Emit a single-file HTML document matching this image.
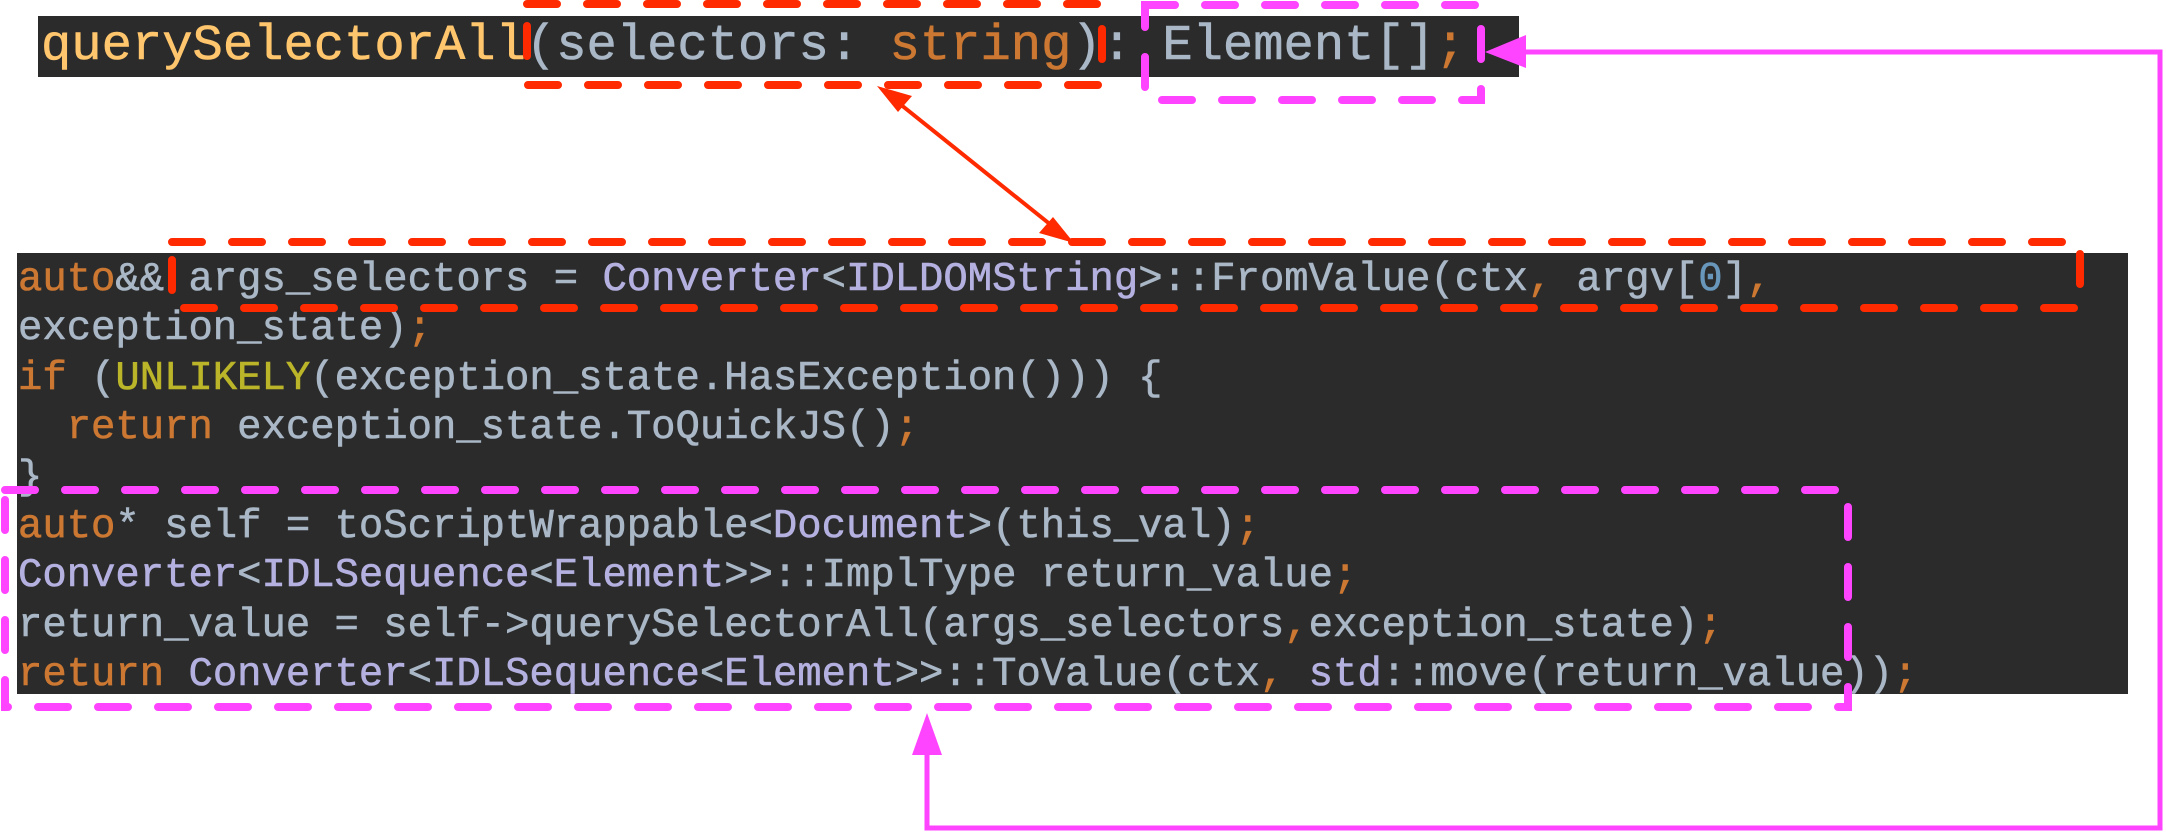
<!DOCTYPE html>
<html><head><meta charset="utf-8"><style>
html,body{margin:0;padding:0;background:#fff;width:2166px;height:833px;overflow:hidden;position:relative}
.box{position:absolute;background:#2b2b2b}
pre{margin:0;position:absolute;font-family:"Liberation Mono","DejaVu Sans Mono",monospace;color:#a9b7c6;white-space:pre;-webkit-text-stroke:0.6px currentColor}
.k{color:#cc7832}.t{color:#b4b0e0}.y{color:#ffc66d}.o{color:#bbb529}.n{color:#6897bb}
svg{position:absolute;left:0;top:0}
</style></head><body>
<div class="box" style="left:38px;top:16px;width:1481px;height:61px"></div>
<pre style="left:41px;top:16px;font-size:50.5px;line-height:61px"><span class="y">querySelectorAll</span>(selectors: <span class="k">string</span>): Element[]<span class="k">;</span></pre>
<div class="box" style="left:17px;top:253px;width:2111px;height:441px"></div>
<pre style="left:18px;top:256px;font-size:40.6px;line-height:49.4px"><span class="k">auto</span>&amp;&amp; args_selectors = <span class="t">Converter</span>&lt;<span class="t">IDLDOMString</span>&gt;::FromValue(ctx<span class="k">,</span> argv[<span class="n">0</span>]<span class="k">,</span>
exception_state)<span class="k">;</span>
<span class="k">if</span> (<span class="o">UNLIKELY</span>(exception_state.HasException())) {
  <span class="k">return</span> exception_state.ToQuickJS()<span class="k">;</span>
}
<span class="k">auto</span>* self = toScriptWrappable&lt;<span class="t">Document</span>&gt;(this_val)<span class="k">;</span>
<span class="t">Converter</span>&lt;<span class="t">IDLSequence</span>&lt;<span class="t">Element</span>&gt;&gt;::ImplType return_value<span class="k">;</span>
return_value = self-&gt;querySelectorAll(args_selectors<span class="k">,</span>exception_state)<span class="k">;</span>
<span class="k">return</span> <span class="t">Converter</span>&lt;<span class="t">IDLSequence</span>&lt;<span class="t">Element</span>&gt;&gt;::ToValue(ctx<span class="k">,</span> <span class="t">std</span>::move(return_value))<span class="k">;</span></pre>
<svg width="2166" height="833" viewBox="0 0 2166 833">
<g fill="none" stroke-width="8" stroke-linecap="round" stroke-dasharray="30 30">
<rect x="527" y="4" width="575" height="81" stroke="#ff2a00"/>
<rect x="1145" y="5" width="336" height="95" stroke="#ff44ff"/>
<rect x="172" y="242" width="1908" height="66" stroke="#ff2a00"/>
<rect x="5" y="490" width="1843" height="217" stroke="#ff44ff"/>
</g>
<line x1="895" y1="100" x2="1056" y2="229" stroke="#ff2a00" stroke-width="4"/>
<polygon points="877,86 912,96 898,112" fill="#ff2a00"/>
<polygon points="1074,243 1039,233 1053,217" fill="#ff2a00"/>
<polyline points="1520,52 2160,52 2160,828 927,828 927,750" fill="none" stroke="#ff44ff" stroke-width="5"/>
<polygon points="1485,52 1526,35 1526,68" fill="#ff44ff"/>
<polygon points="927,713 912,755 942,755" fill="#ff44ff"/>
</svg>
</body></html>
